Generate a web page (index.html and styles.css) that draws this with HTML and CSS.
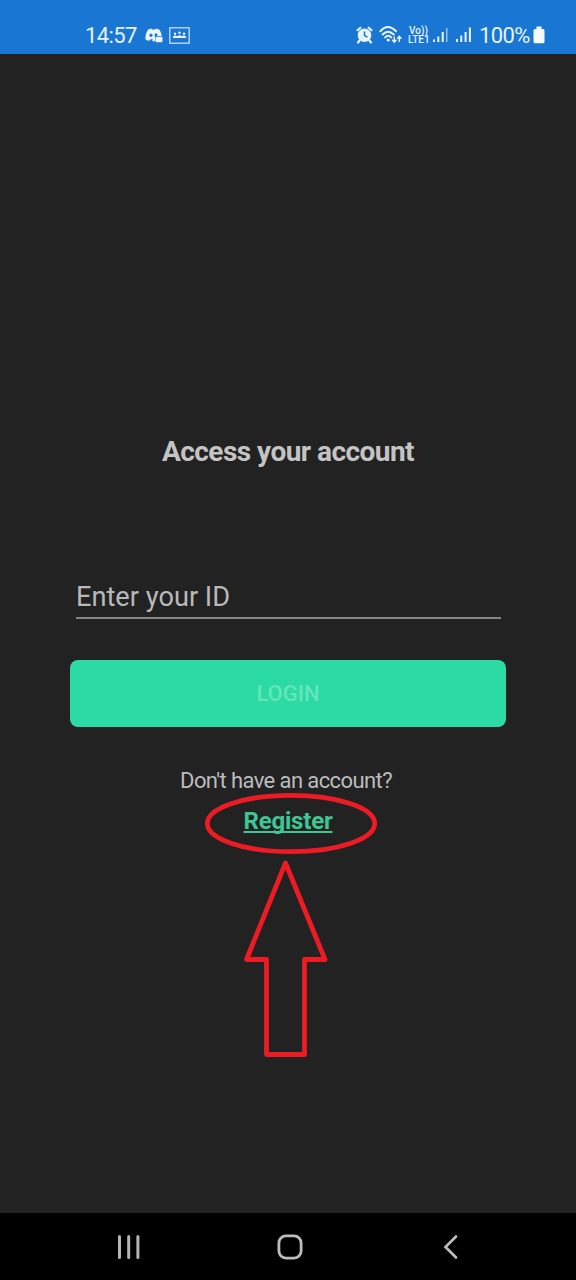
FILE: index.html
```html
<!DOCTYPE html>
<html lang="en">
<head>
<meta charset="utf-8">
<title>Access your account</title>
<link rel="stylesheet" href="styles.css">
</head>
<body>
<div class="screen">
  <header class="status-bar">
    <div class="status-left">
      <span class="clock">14:57</span>
      <svg class="icon-discord" width="18" height="15" viewBox="0 0 18 15">
        <path d="M3.500 1.200 6.400.5l.7 1h3l.8-1 3 .8c1.800 2 2.600 4.200 2.800 6.700H10v5.300H7.200l.6-2H5.500l-1.300 1.500C2.500 12.500 1.200 12 .4 11.200.2 7.500 1.300 3.700 3.500 1.200Z" fill="#eaf4ff"/>
        <ellipse cx="6" cy="7.300" rx="1.500" ry="1.700" fill="#1976d2"/>
        <ellipse cx="11" cy="6.800" rx="1.500" ry="1.600" fill="#1976d2"/>
        <rect x="10.500" y="8.800" width="7" height="5.400" rx="1" fill="#eaf4ff"/>
      </svg>
      <svg class="icon-frame" width="21" height="17" viewBox="0 0 21 17">
        <rect x=".8" y=".8" width="19.400" height="15.400" fill="none" stroke="#d8ebff" stroke-width="1.200"/>
        <g fill="#eaf4ff"><circle cx="6" cy="6.800" r="1.200"/><circle cx="10.500" cy="5.800" r="1.300"/><circle cx="15" cy="6.800" r="1.200"/>
        <path d="M4 11V9.300Q6 8 8 9.200 10.500 7.300 13 9.200 15 8 17 9.300V11Z"/></g>
      </svg>
    </div>
    <div class="status-right">
      <svg class="icon-alarm" width="17" height="18" viewBox="0 0 17 18">
        <circle cx="8.500" cy="9.200" r="6.800" fill="#eaf4ff"/>
        <path d="M1.500 4.200 4.300 1.700M15.500 4.200 12.700 1.700M3.600 14.500 2 16.500M13.400 14.500l1.600 2" stroke="#eaf4ff" stroke-width="2.200" stroke-linecap="round"/>
        <path d="M8.500 5.400v4.200l3 1.500" fill="none" stroke="#1976d2" stroke-width="1.500"/>
      </svg>
      <svg class="icon-wifi" width="24" height="19" viewBox="0 0 24 19">
        <g fill="none" stroke="#eaf4ff" stroke-width="2" stroke-linecap="round">
          <path d="M1.300 6.300Q8.700-2.200 17 6.300M3.700 9.500q5-5.700 11 0M6.200 12.400q3-3.200 6 0"/>
        </g>
        <circle cx="9.200" cy="15" r="1.600" fill="#eaf4ff"/>
        <g fill="none" stroke="#eaf4ff" stroke-width="1.400"><path d="M15.300 11.500v5.500M13.200 14.700l2.100 2.500 2.100-2.500M20.300 17v-5.500M18.200 13.800l2.100-2.500 2.100 2.500"/></g>
      </svg>
      <span class="volte"><span>Vo))</span><span>LTE1</span></span>
      <svg class="icon-signal-a" width="15" height="16" viewBox="0 0 15 16">
        <path d="M0 12.500h2V15H0ZM4.300 9.500h2V15h-2ZM8.700 5h2v10h-2Z" fill="#eaf4ff"/>
        <path d="M13 1h1.500v14H13Z" fill="#91c2f1"/>
      </svg>
      <svg class="icon-signal-b" width="15" height="16" viewBox="0 0 15 16">
        <path d="M0 12h2v3H0ZM4.300 8.500h2V15h-2ZM8.600 5h2v10h-2ZM12.900.5h2V15h-2Z" fill="#eaf4ff"/>
      </svg>
      <span class="percent">100%</span>
      <svg class="icon-battery" width="12" height="18" viewBox="0 0 12 18">
        <path d="M3.500.5h5V3H10q1.500 0 1.500 1.500v11.300q0 1.500-1.500 1.500H2Q.5 17.300.5 15.800V4.500Q.5 3 2 3h1.500Z" fill="#f5faff"/>
      </svg>
    </div>
  </header>

  <main class="login">
    <h1 class="title">Access your account</h1>
    <div class="id-field">Enter your ID</div>
    <button class="login-button" type="button" disabled>LOGIN</button>
    <p class="prompt">Don't have an account?</p>
    <a class="register">Register</a>
    <svg class="annotation" width="180" height="270" viewBox="200 790 180 270">
      <g fill="none" stroke="#ed1c24" stroke-width="4.800" stroke-linejoin="round">
        <ellipse cx="291" cy="823.500" rx="83.700" ry="28.200"/>
        <path d="M285.500 863 325 959.500H304.500V1054.500H266.500V959.500H246.500Z"/>
      </g>
    </svg>
  </main>

  <nav class="nav-bar">
    <svg width="24" height="26" viewBox="0 0 24 26"><path d="M2.500 2.500v21M11.700 2.500v21M20.900 2.500v21" stroke="#b5b5b5" stroke-width="3" stroke-linecap="round"/></svg>
    <svg class="nav-home" width="26" height="26" viewBox="0 0 26 26"><rect x="1.900" y="1.900" width="22.200" height="22.200" rx="7" fill="none" stroke="#bcbcbc" stroke-width="2.800"/></svg>
    <svg width="16" height="26" viewBox="0 0 16 26"><path d="M13 2.500 2.500 13 13 23.500" fill="none" stroke="#bcbcbc" stroke-width="2.700" stroke-linecap="round"/></svg>
  </nav>
</div>
</body>
</html>
```
FILE: styles.css
```css
* { box-sizing: border-box; }
body { margin: 0; background: #222; font-family: Roboto, "Liberation Sans", sans-serif; }
svg { display: block; flex: none; }
.screen { width: 576px; height: 1280px; display: flex; flex-direction: column; background: #222; }

.status-bar {
  height: 54px;
  flex: none;
  display: flex;
  justify-content: space-between;
  padding: 16px 31px 0 85px;
  background: #1976d2;
  color: #e6f2ff;
}
.status-left, .status-right { display: flex; align-items: flex-start; height: 38px; }
.clock, .percent { height: 38px; font-size: 22px; line-height: 39px; white-space: nowrap; }
.clock { width: 52px; letter-spacing: -0.6px; }
.percent { width: 51px; margin-left: 8px; letter-spacing: -0.65px; }
.icon-discord { margin: 12px 0 0 8px; }
.icon-frame { margin: 11px 0 0 6px; }
.icon-alarm { margin-top: 10px; }
.icon-wifi { margin: 9px 0 0 6px; }
.volte { display: flex; flex-direction: column; margin: 10px 0 0 5px; width: 21px; font-size: 10px; font-weight: 500; line-height: 9px; text-align: center; }
.icon-signal-a { margin: 11px 0 0 4px; }
.icon-signal-b { margin: 11px 0 0 8px; }
.icon-battery { margin: 10px 0 0 3px; }

.login {
  flex: 1;
  position: relative;
  display: flex;
  flex-direction: column;
  padding: 381px 70px 0;
  color: #bcbcbc;
}
.title { margin: 0; height: 34px; font-size: 28px; font-weight: 700; line-height: 34px; letter-spacing: -0.54px; text-align: center; color: #c4c4c4; }
.id-field { height: 44px; margin: 106px 5px 0 6px; border-bottom: 2px solid #858585; font-size: 27.200px; line-height: 44px; color: #b9b9b9; }
.login-button { height: 67px; margin: 41px 0 0; padding: 1px 0 0; border: 0; border-radius: 8px; background: #2bdaa4; color: #65e5bd; font: 500 22px/66px Roboto, "Liberation Sans", sans-serif; text-align: center; }
.prompt { margin: 40px 4px 0 0; font-size: 22px; line-height: 28px; letter-spacing: -0.6px; text-align: center; }
.register { margin-top: 11px; align-self: center; font-size: 24px; font-weight: 700; line-height: 30px; letter-spacing: -0.2px; color: #3dc795; text-decoration: underline; text-decoration-thickness: 1.500px; text-underline-offset: 2px; text-decoration-skip-ink: none; }
.annotation { position: absolute; left: 200px; top: 736px; }

.nav-bar { height: 67px; flex: none; display: flex; align-items: center; justify-content: space-between; padding: 0 117px; background: #000; }
.nav-home { margin-right: 5px; }
```
